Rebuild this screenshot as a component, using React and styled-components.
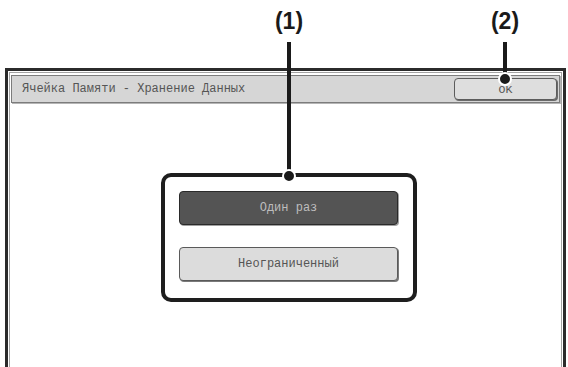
import React from "react";
import styled, {createGlobalStyle} from "styled-components";

const GlobalStyle = createGlobalStyle`
    html, body {
        margin: 0;
        padding: 0;
        background: #ffffff;
    }
    body {
        font-family: "Liberation Mono", "DejaVu Sans Mono", monospace;
    }
`

const Page = styled.div`
    position: relative;
    width: 568px;
    height: 367px;
    overflow: hidden;
    padding-top: 68px;
    box-sizing: border-box;
`

const Frame = styled.div`
    margin-left: 5px;
    width: 561px;
    height: 320px;
    box-sizing: border-box;
    border: 3px solid #2b2b2b;
    border-bottom: none;
    box-shadow: inset 0 0 0 1px #ffffff, inset 0 0 0 2px #a3a3a3;
    padding: 4px 3px 0 3px;
    display: flex;
    flex-direction: column;
`

const TitleBar = styled.div`
    height: 28px;
    box-sizing: border-box;
    border: 1px solid #7c7c7c;
    background: #d6d6d6;
    box-shadow: 1px 1px 0 #b5b5b5;
    display: flex;
    align-items: center;
    justify-content: space-between;
    padding: 0 2px 0 10px;
`

const Title = styled.div`
    font-size: 12px;
    color: #555555;
`

const OkButton = styled.div`
    width: 103px;
    height: 22px;
    box-sizing: border-box;
    border: 1px solid #5c5c5c;
    border-radius: 4px;
    background: #dedede;
    box-shadow: 1px 1px 0 #6a6a6a;
    display: flex;
    align-items: center;
    justify-content: center;
    padding-top: 2px;
    font-size: 11.5px;
    color: #555555;
    margin-top: -1px;
`

const Content = styled.div`
    padding: 70px 0 0 150px;
`

const ChoiceBox = styled.div`
    width: 256px;
    height: 129px;
    box-sizing: border-box;
    border: 4px solid #1e1e1e;
    border-radius: 10px;
    padding: 14px 15px 0 14px;
    display: flex;
    flex-direction: column;
    gap: 22px;
`

const Choice = styled.div`
    height: 34px;
    box-sizing: border-box;
    border-radius: 4px;
    border: 1px solid ${p => p.$active ? "#2a2a2a" : "#5a5a5a"};
    background: ${p => p.$active ? "#545454" : "#dcdcdc"};
    color: ${p => p.$active ? "#bdbdbd" : "#555555"};
    box-shadow: 1px 1px 0 ${p => p.$active ? "#a0a0a0" : "#7a7a7a"};
    display: flex;
    align-items: center;
    justify-content: center;
    font-size: 12px;
`

const Label = styled.div`
    position: absolute;
    top: 8px;
    left: ${p => p.$x - 30}px;
    width: 60px;
    text-align: center;
    font-family: "Liberation Sans", Arial, sans-serif;
    font-weight: bold;
    font-size: 23px;
    color: #1a1a1a;
`

const Leader = styled.div`
    position: absolute;
    left: ${p => p.$x - 2}px;
    top: 42px;
    width: 4px;
    height: ${p => p.$end - 42}px;
    background: #1a1a1a;
`

const Dot = styled.div`
    position: absolute;
    left: ${p => p.$x - 7}px;
    top: ${p => p.$end - 7}px;
    width: 10px;
    height: 10px;
    border-radius: 50%;
    background: #1a1a1a;
    border: 2px solid #ffffff;
`

function Callout({label, x, end}) {
    return (
        <>
            <Label $x={x}>{label}</Label>
            <Leader $x={x} $end={end}/>
            <Dot $x={x} $end={end}/>
        </>
    );
}

export default function App() {
    return (
        <Page>
            <GlobalStyle/>
            <Frame>
                <TitleBar>
                    <Title>Ячейка Памяти - Хранение Данных</Title>
                    <OkButton>OK</OkButton>
                </TitleBar>
                <Content>
                    <ChoiceBox>
                        <Choice $active>Один раз</Choice>
                        <Choice>Неограниченный</Choice>
                    </ChoiceBox>
                </Content>
            </Frame>
            <Callout label="(1)" x={289} end={176}/>
            <Callout label="(2)" x={505} end={79}/>
        </Page>
    );
}
